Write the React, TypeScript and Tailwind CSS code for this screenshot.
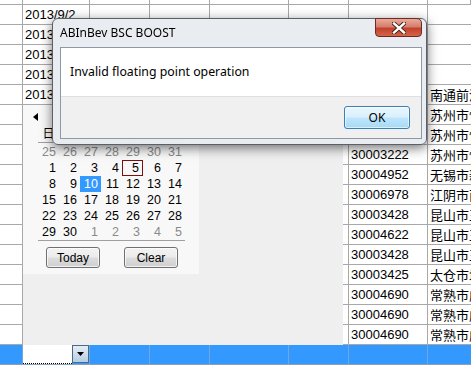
import React from "react";

const COLS = "grid grid-cols-[23px_67px_60px_60px_79px_60px_79px_1fr]";
const CELL = "border-r border-b border-[#a8a8a8] overflow-hidden whitespace-nowrap pl-[2px] leading-[19px]";

type Row = { a?: string; n?: string; c?: string };
const rows: Row[] = [
  { a: "2013/9/2" },
  { a: "2013" },
  { a: "2013" },
  { a: "2013" },
  { a: "2013", c: "南通前港" },
  { c: "苏州市悦" },
  { c: "苏州市悦" },
  { n: "30003222", c: "苏州市悦" },
  { n: "30004952", c: "无锡市新" },
  { n: "30006978", c: "江阴市西" },
  { n: "30003428", c: "昆山市玉" },
  { n: "30004622", c: "昆山市玉" },
  { n: "30003428", c: "昆山市玉" },
  { n: "30003425", c: "太仓市城" },
  { n: "30004690", c: "常熟市虞" },
  { n: "30004690", c: "常熟市虞" },
  { n: "30004690", c: "常熟市虞" },
];

const days = [
  [25, 26, 27, 28, 29, 30, 31],
  [1, 2, 3, 4, 5, 6, 7],
  [8, 9, 10, 11, 12, 13, 14],
  [15, 16, 17, 18, 19, 20, 21],
  [22, 23, 24, 25, 26, 27, 28],
  [29, 30, 1, 2, 3, 4, 5],
];

function Calendar() {
  return (
    <div className="absolute left-[23px] top-[105px] w-[320px] h-[240px] bg-[#efefef]">
      <div className="w-[176px] h-[169px] bg-[#f8f8f8] flex flex-col">
        <div className="h-[20px] pl-[10px] pt-[8px]">
          <svg width="6" height="8" viewBox="0 0 6 8">
            <polygon points="5,0 5,8 0,4" fill="#000" />
          </svg>
        </div>
        <div className="ml-[15px] w-[147px] h-[18px] border-b border-[#a0a0a0] grid grid-cols-7 text-[12px] leading-[16px] [font-family:'Noto_Sans_CJK_SC',sans-serif]">
          {["日", "一", "二", "三", "四", "五", "六"].map((d) => (
            <div key={d} className="text-center">{d}</div>
          ))}
        </div>
        <div className="ml-[15px] w-[147px] mt-[1px] border-b border-[#a0a0a0] grid grid-cols-[repeat(7,21px)] grid-rows-[repeat(6,16px)] text-[12.5px] leading-[16px]">
          {days.map((r, ri) =>
            r.map((d, ci) => {
              const gray = ri === 0 || (ri === 5 && ci >= 2);
              const sel = ri === 2 && ci === 2;
              const today = ri === 1 && ci === 4;
              return (
                <div
                  key={`${ri}-${ci}`}
                  className={`text-right pr-[3px] ${gray ? "text-[#8a8a8a]" : "text-black"} ${
                    sel ? "bg-[#3399ff] text-white" : ""
                  } ${today ? "border border-[#7a1010] leading-[14px] pr-[2px]" : ""}`}
                >
                  {d}
                </div>
              );
            })
          )}
        </div>
        <div className="flex pl-[23px] gap-[24px] mt-[6px]">
          {["Today", "Clear"].map((t) => (
            <div
              key={t}
              className="w-[54px] h-[21px] rounded-[3px] border border-[#707070] bg-[linear-gradient(#f3f3f3,#ebebeb_48%,#dcdcdc_52%,#cfcfcf)] flex items-center justify-center text-[12px] shadow-[inset_0_0_0_1px_rgba(255,255,255,0.7)]"
            >
              {t}
            </div>
          ))}
        </div>
      </div>
    </div>
  );
}

function Dialog() {
  return (
    <div className="absolute left-[52px] top-[18px] w-[375px] h-[127px] rounded-[6px] border border-[#5b6068] bg-[rgba(232,236,240,0.94)] backdrop-blur-[4px] shadow-[0_3px_12px_rgba(0,0,0,0.55)] flex flex-col pl-[7px] pr-[4px] pb-[5px] [font-family:'Noto_Sans',sans-serif]">
      <div className="h-[28px] relative">
        <span className="absolute left-[0px] top-[6px] text-[12px] leading-[16px] text-black">ABInBev BSC BOOST</span>
        <div className="absolute right-[0px] top-[-1px] w-[47px] h-[19px] rounded-b-[4px] rounded-tr-[5px] border border-[#6b2a22] bg-[linear-gradient(#e9a99b,#d67f6e_45%,#c2412b_55%,#d4654a)] flex items-center justify-center">
          <svg width="14" height="12" viewBox="0 0 14 12">
            <path d="M2 1.5 L12 10.5 M12 1.5 L2 10.5" stroke="#3a1a14" strokeWidth="4.2" strokeLinecap="square" />
            <path d="M2 1.5 L12 10.5 M12 1.5 L2 10.5" stroke="#fff" strokeWidth="2.4" strokeLinecap="square" />
          </svg>
        </div>
      </div>
      <div className="h-[92px] border border-[#8e99a5] bg-white flex flex-col">
        <div className="h-[48px] flex items-center pl-[9px] text-[12.3px] text-black">Invalid floating point operation</div>
        <div className="flex-1 bg-[#f0f0f0] border-t border-[#dfdfdf] flex items-center justify-end pr-[11px]">
          <div className="w-[66px] h-[23px] rounded-[3px] border border-[#3c7fb1] bg-[linear-gradient(#eaf6fd,#d9f0fc_48%,#bee6fd_52%,#a7d9f5)] shadow-[inset_0_0_0_1px_rgba(255,255,255,0.6)] flex items-center justify-center text-[12px] text-black">
            OK
          </div>
        </div>
      </div>
    </div>
  );
}

export default function App() {
  return (
    <div className="relative w-[471px] h-[374px] overflow-hidden bg-white text-black [font-family:'Liberation_Sans',Arial,sans-serif] text-[13px]">
      <div className="flex flex-col">
        <div className={`${COLS} h-[5px]`}>
          {Array.from({ length: 8 }).map((_, i) => (
            <div key={i} className="border-r border-b border-[#a8a8a8]" />
          ))}
        </div>
        {rows.map((r, i) => (
          <div key={i} className={`${COLS} h-[20px]`}>
            <div className={CELL} />
            <div className={CELL}>{r.a ?? ""}</div>
            <div className={CELL} />
            <div className={CELL} />
            <div className={CELL} />
            <div className={CELL} />
            <div className={CELL}>{r.n ?? ""}</div>
            <div className={`${CELL} border-r-0 text-[13px] [font-family:'Noto_Sans_CJK_SC',sans-serif]`}>{r.c ?? ""}</div>
          </div>
        ))}
        <div className={`${COLS} h-[20px] bg-[#3399ff] border-b border-[#8aa0b8]`}>
          <div className="border-r border-[#6fa7e0]" />
          <div className="border-r border-[#6fa7e0] flex">
            <div className="flex-1 bg-white border-b border-dotted border-black" />
            <div className="w-[17px] h-[18px] border border-[#4a6a8c] bg-[linear-gradient(#e4edf6,#b8cde2)] flex items-center justify-center">
              <svg width="7" height="4" viewBox="0 0 7 4">
                <polygon points="0,0 7,0 3.5,4" fill="#000" />
              </svg>
            </div>
          </div>
          <div className="border-r border-[#6fa7e0]" />
          <div className="border-r border-[#6fa7e0]" />
          <div className="border-r border-[#6fa7e0]" />
          <div className="border-r border-[#6fa7e0]" />
          <div className="border-r border-[#6fa7e0]" />
          <div />
        </div>
      </div>
      <Calendar />
      <Dialog />
    </div>
  );
}
